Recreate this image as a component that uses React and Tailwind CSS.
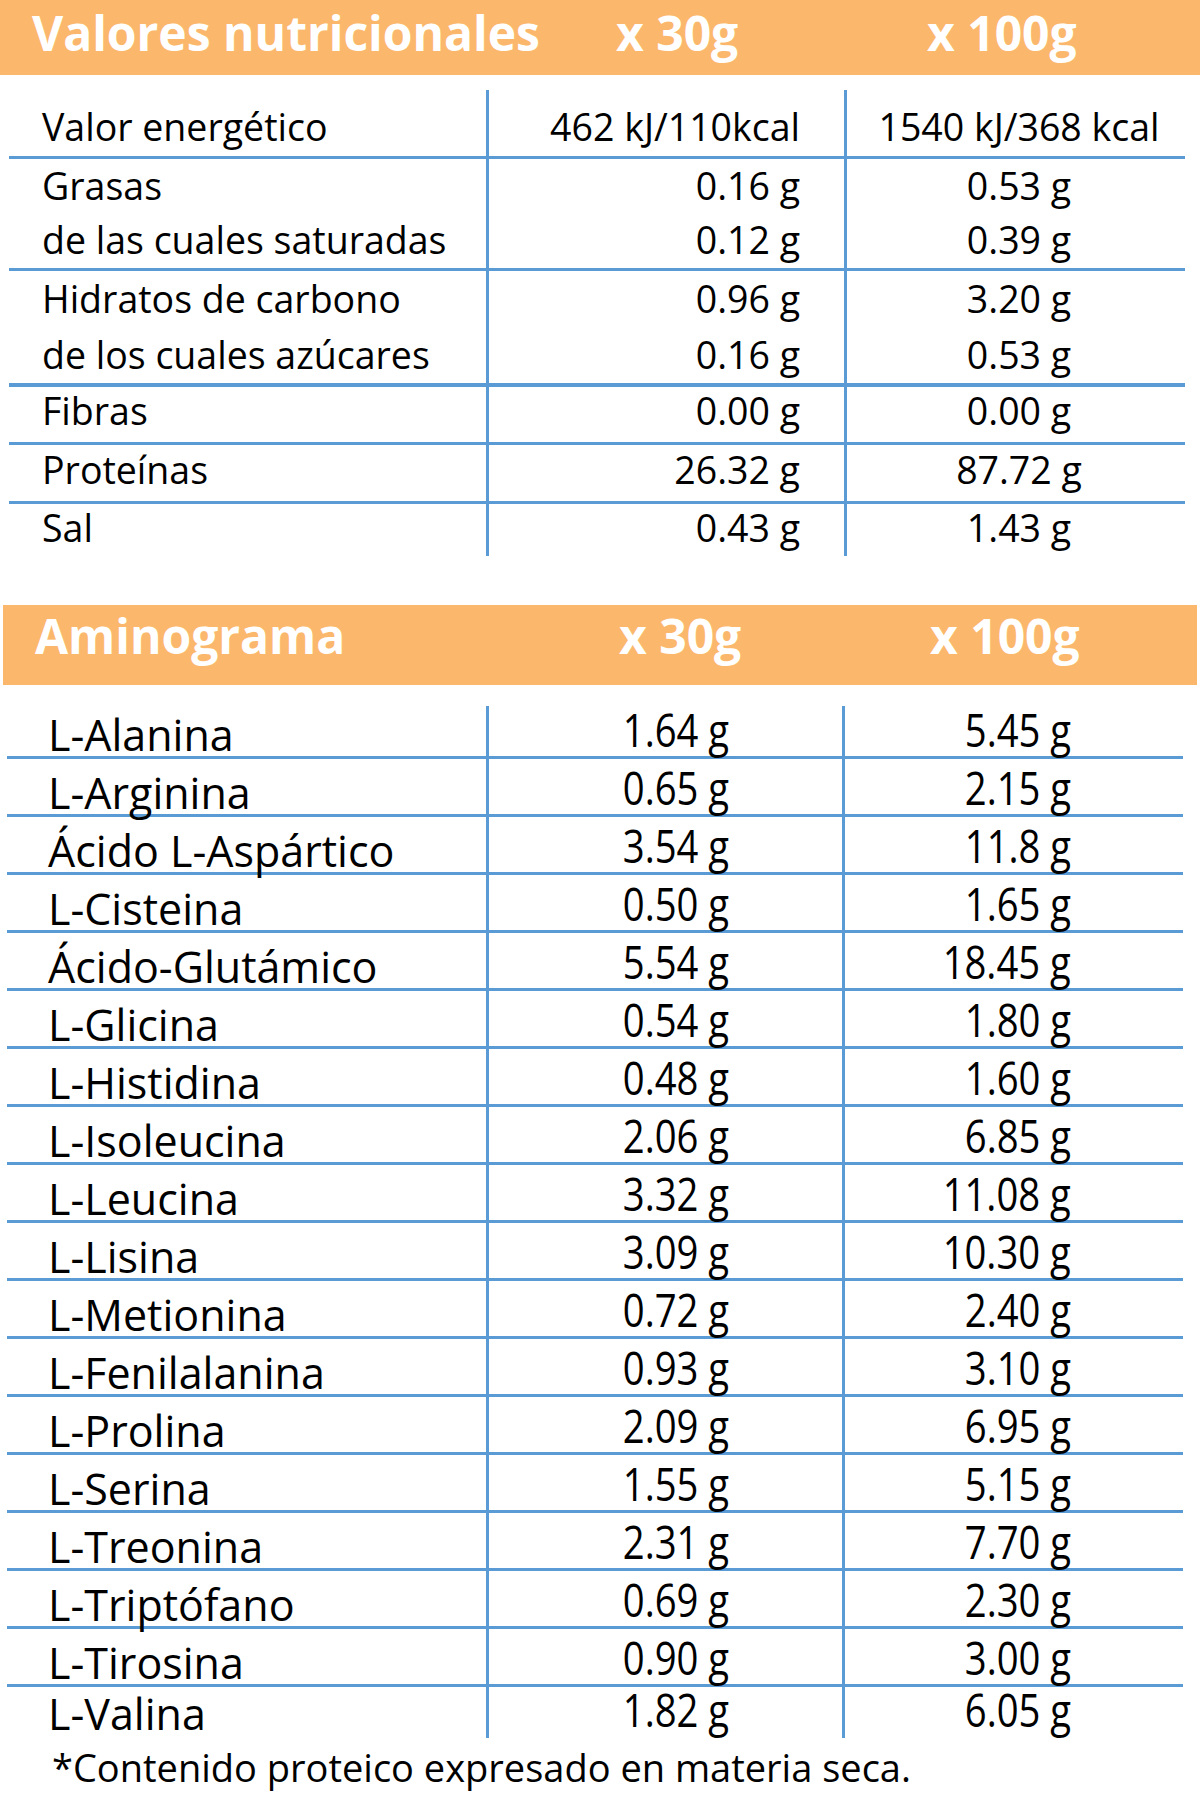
import React from "react";

const nutri = [
  { label: "Valor energético", a: "462 kJ/110kcal", b: "1540 kJ/368 kcal", h: "h-[69px]", line: "border-b-[3px]", pb: "pb-[11px]" },
  { label: "Grasas", a: "0.16 g", b: "0.53 g", h: "h-[56px]", line: "", pb: "pb-[11px]" },
  { label: "de las cuales saturadas", a: "0.12 g", b: "0.39 g", h: "h-[56px]", line: "border-b-[3px]", pb: "pb-[10px]" },
  { label: "Hidratos de carbono", a: "0.96 g", b: "3.20 g", h: "h-[58px]", line: "", pb: "pb-[12px]" },
  { label: "de los cuales azúcares", a: "0.16 g", b: "0.53 g", h: "h-[58px]", line: "border-b-[4px]", pb: "pb-[10px]" },
  { label: "Fibras", a: "0.00 g", b: "0.00 g", h: "h-[58px]", line: "border-b-[3px]", pb: "pb-[13px]" },
  { label: "Proteínas", a: "26.32 g", b: "87.72 g", h: "h-[59px]", line: "border-b-[3px]", pb: "pb-[13px]" },
  { label: "Sal", a: "0.43 g", b: "1.43 g", h: "h-[52px]", line: "", pb: "pb-[10px]" },
];

const amino = [
  ["L-Alanina", "1.64 g", "5.45 g"],
  ["L-Arginina", "0.65 g", "2.15 g"],
  ["Ácido L-Aspártico", "3.54 g", "11.8 g"],
  ["L-Cisteina", "0.50 g", "1.65 g"],
  ["Ácido-Glutámico", "5.54 g", "18.45 g"],
  ["L-Glicina", "0.54 g", "1.80 g"],
  ["L-Histidina", "0.48 g", "1.60 g"],
  ["L-Isoleucina", "2.06 g", "6.85 g"],
  ["L-Leucina", "3.32 g", "11.08 g"],
  ["L-Lisina", "3.09 g", "10.30 g"],
  ["L-Metionina", "0.72 g", "2.40 g"],
  ["L-Fenilalanina", "0.93 g", "3.10 g"],
  ["L-Prolina", "2.09 g", "6.95 g"],
  ["L-Serina", "1.55 g", "5.15 g"],
  ["L-Treonina", "2.31 g", "7.70 g"],
  ["L-Triptófano", "0.69 g", "2.30 g"],
  ["L-Tirosina", "0.90 g", "3.00 g"],
  ["L-Valina", "1.82 g", "6.05 g"],
];

const HeaderBar = ({ title, className }) => (
  <div className={`flex bg-[#fbb86c] font-bold text-white text-[48px] leading-none ${className}`}>
    <div className="w-[616px] pl-[32px]">{title}</div>
    <div className="w-[311px]">x 30g</div>
    <div>x 100g</div>
  </div>
);

export default function App() {
  return (
    <div className="w-[1200px] h-[1796px] bg-white text-black font-['Open_Sans','Noto_Sans',sans-serif]">
      <HeaderBar title="Valores nutricionales" className="h-[75px] pt-[9px]" />

      {/* valores nutricionales */}
      <div className="mt-[15px] ml-[9px] w-[1176px] text-[37.5px] leading-none">
        {nutri.map((r, i) => (
          <div key={i} className={`grid grid-cols-[477px_358px_341px] border-[#5b9bd5] ${r.h} ${r.line}`}>
            <div className={`flex items-end pl-[33px] ${r.pb}`}>{r.label}</div>
            <div className={`flex items-end justify-end pr-[44px] border-l-[3px] border-[#5b9bd5] ${r.pb}`}>{r.a}</div>
            <div className={`flex items-end justify-center pl-[6px] border-l-[3px] border-[#5b9bd5] ${r.pb}`}>{r.b}</div>
          </div>
        ))}
      </div>

      <HeaderBar title="Aminograma" className="mt-[49px] ml-[3px] mr-[3px] h-[80px] pt-[7px]" />

      {/* aminograma */}
      <div className="mt-[21px] ml-[7px] w-[1176px] text-[43px] leading-none">
        {amino.map(([label, a, b], i) => {
          const last = i === amino.length - 1;
          return (
            <div
              key={label}
              className={`grid grid-cols-[479px_356px_341px] border-[#5b9bd5] ${i === 0 ? "h-[53px]" : last ? "h-[43px]" : "h-[58px]"} ${last ? "" : "border-b-[3px]"}`}
            >
              <div className={`flex items-end pl-[41px] ${last ? "pb-[3px]" : ""}`}>{label}</div>
              <div className={`flex items-end justify-end pr-[113px] border-l-[3px] border-[#5b9bd5] ${last ? "pb-[6px]" : "pb-[4px]"}`}>
                <span className="inline-block origin-right scale-x-[0.85] text-[45px]">{a}</span>
              </div>
              <div className={`flex items-end justify-end pr-[112px] border-l-[3px] border-[#5b9bd5] ${last ? "pb-[6px]" : "pb-[4px]"}`}>
                <span className="inline-block origin-right scale-x-[0.85] text-[45px]">{b}</span>
              </div>
            </div>
          );
        })}
      </div>

      <div className="mt-[18px] pl-[52px] text-[38px] leading-none">*Contenido proteico expresado en materia seca.</div>
    </div>
  );
}
